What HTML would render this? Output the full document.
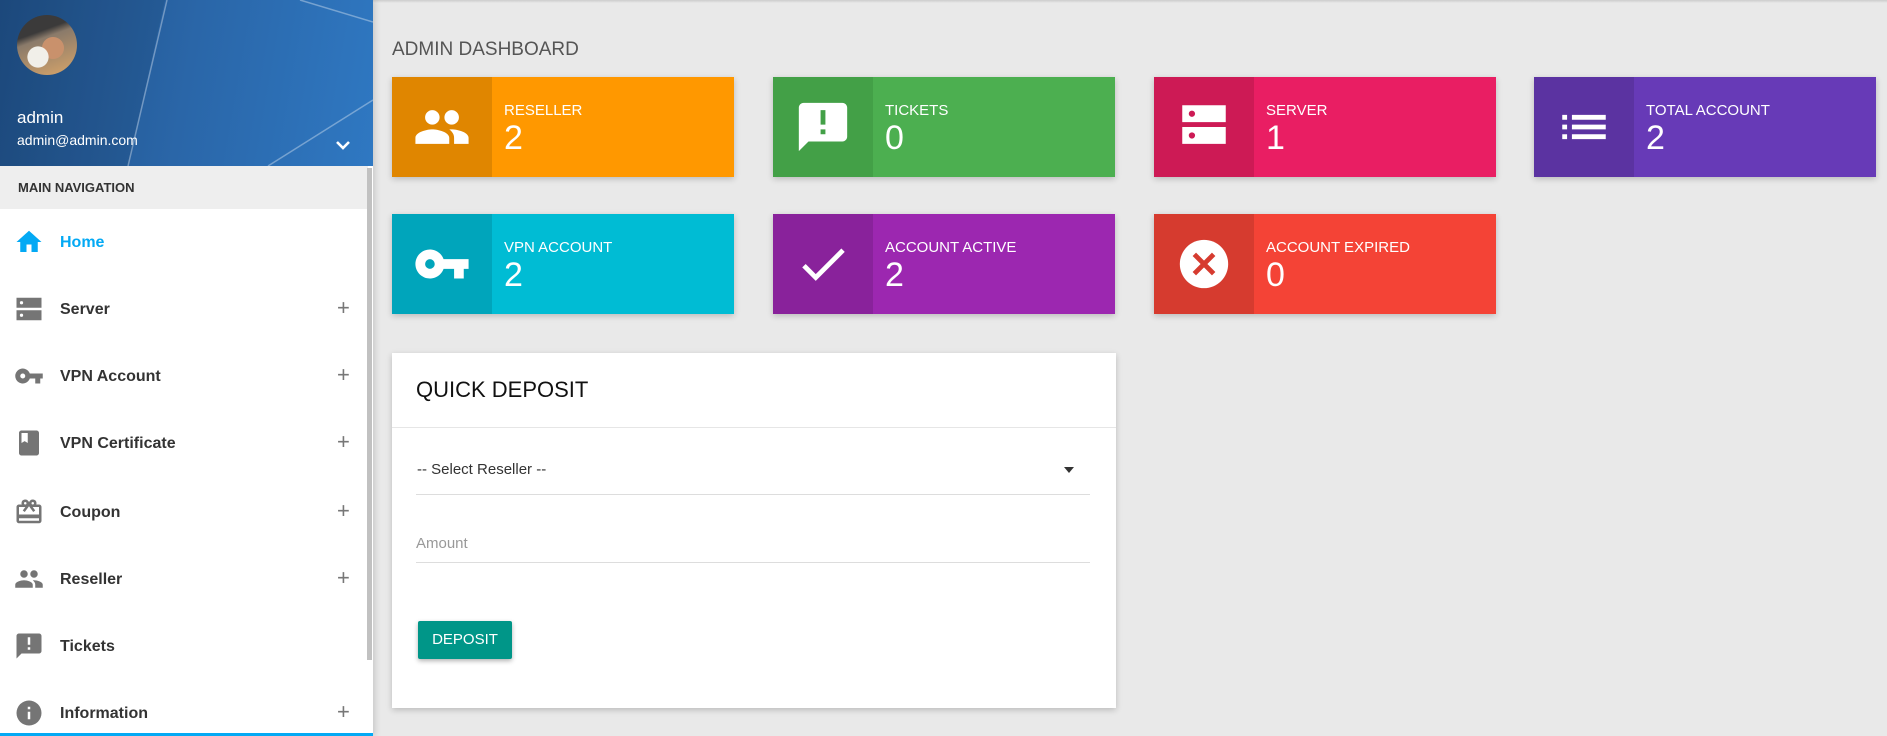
<!DOCTYPE html>
<html><head><meta charset="utf-8"><style>
*{margin:0;padding:0;box-sizing:border-box}
body{width:1887px;height:736px;overflow:hidden;background:#e9e9e9;font-family:"Liberation Sans",Arial,sans-serif;position:relative}
.side{position:absolute;left:0;top:0;width:373px;height:736px;background:#fff;box-shadow:2px 0 6px rgba(0,0,0,.15)}
.hdr{position:absolute;left:0;top:0;width:373px;height:166px;background:linear-gradient(100deg,#1f4f86 0%,#2a66a8 50%,#2f78c2 100%);overflow:hidden}
.av{position:absolute;left:17px;top:15px;width:60px;height:60px;border-radius:50%;background:radial-gradient(circle at 35% 70%,#f1efe9 0 18%,transparent 19%),radial-gradient(circle at 60% 55%,#c9916c 0 22%,transparent 23%),linear-gradient(160deg,#3b3a3a 0 30%,#8a7a6a 40%,#d8a56a 100%)}
.nm{position:absolute;left:17px;top:108px;color:#fff;font-size:17px}
.em{position:absolute;left:17px;top:132px;color:#fff;font-size:14px}
.mn{position:absolute;left:0;top:166px;width:368px;height:43px;background:#eee;font-size:13px;font-weight:bold;color:#333;padding:14px 0 0 18px}
.it{position:absolute;left:0;width:368px;height:30px}
.it svg{position:absolute;left:14px;top:-1px;width:30px;height:30px;fill:#757575}
.it span{position:absolute;left:60px;top:6px;font-size:16px;font-weight:bold;color:#333}
.it b{position:absolute;left:337px;top:0;font-size:22px;font-weight:normal;color:#777}
.sb{position:absolute;left:367px;top:168px;width:5px;height:492px;background:#c1c1c1}
.bl{position:absolute;left:0;top:733px;width:373px;height:3px;background:#03a9f4}
.ttl{position:absolute;left:392px;top:39px;font-size:19px;color:#555}
.card{position:absolute;width:342px;height:100px;box-shadow:0 2px 6px rgba(0,0,0,.2);color:#fff}
.card .ic{position:absolute;left:0;top:0;width:100px;height:100px;display:flex;align-items:center;justify-content:center}
.card .ic svg{width:58px;height:58px;fill:#fff}
.card .l{position:absolute;left:112px;top:25px;font-size:15px}
.card .n{position:absolute;left:112px;top:42px;font-size:34px}
.qd{position:absolute;left:392px;top:353px;width:724px;height:355px;background:#fff;box-shadow:0 2px 6px rgba(0,0,0,.2)}
.qd h2{position:absolute;left:24px;top:24px;font-size:22px;font-weight:normal;color:#111}
.dv{position:absolute;left:0;top:74px;width:100%;height:1px;background:#e6e6e6}
.f{position:absolute;left:24px;width:674px;border-bottom:1px solid #ddd;font-size:15px}
.btn{position:absolute;left:26px;top:268px;width:94px;height:38px;background:#009688;color:#fff;font-size:15px;text-align:center;line-height:38px;border-radius:2px;box-shadow:0 2px 5px rgba(0,0,0,.3)}
.topsh{position:absolute;left:373px;top:0;width:1514px;height:3px;background:linear-gradient(#ccc,#e9e9e9)}
</style></head><body>
<div class="topsh"></div>
<div class="side">
 <div class="hdr">
  <svg width="373" height="166" style="position:absolute;left:0;top:0"><polygon points="0,0 165,0 128,166 0,166" fill="rgba(0,0,0,.08)"/><line x1="167" y1="0" x2="128" y2="166" stroke="rgba(255,255,255,.35)" stroke-width="1.5"/><line x1="300" y1="0" x2="373" y2="22" stroke="rgba(255,255,255,.35)" stroke-width="1.5"/><line x1="268" y1="166" x2="373" y2="100" stroke="rgba(255,255,255,.35)" stroke-width="1.5"/></svg>
  <div class="av"></div>
  <div class="nm">admin</div>
  <div class="em">admin@admin.com</div>
  <svg style="position:absolute;left:334px;top:138px" width="18" height="14" viewBox="0 0 18 14"><path d="M3 4l6 6 6-6" stroke="#fff" stroke-width="2.6" fill="none"/></svg>
 </div>
 <div class="mn">MAIN NAVIGATION</div>
 <div class="it" style="top:228px"><svg viewBox="0 0 24 24" style="fill:#03a9f4"><path d="M10 20v-6h4v6h5v-8h3L12 3 2 12h3v8z"/></svg><span style="color:#03a9f4">Home</span></div>
 <div class="it" style="top:295px"><svg viewBox="0 0 24 24"><path d="M2 3h20v8H2zM2 13h20v8H2z"/><circle cx="6" cy="7" r="1.3" fill="#fff"/><circle cx="6" cy="17" r="1.3" fill="#fff"/></svg><span>Server</span><b>+</b></div>
 <div class="it" style="top:362px"><svg viewBox="0 0 24 24"><path d="M12.65 10A6 6 0 1 0 12.65 14H17v4h4v-4h2v-4H12.65zM7 14a2 2 0 1 1 0-4 2 2 0 0 1 0 4z"/></svg><span>VPN Account</span><b>+</b></div>
 <div class="it" style="top:429px"><svg viewBox="0 0 24 24"><path d="M18 2H6c-1.1 0-2 .9-2 2v16c0 1.1.9 2 2 2h12c1.1 0 2-.9 2-2V4c0-1.1-.9-2-2-2zM6 4h5v8l-2.5-1.5L6 12V4z"/></svg><span>VPN Certificate</span><b>+</b></div>
 <div class="it" style="top:498px"><svg viewBox="0 0 24 24"><path d="M20 6h-2.18c.11-.31.18-.65.18-1a3 3 0 0 0-5.5-1.65l-.5.67-.5-.68A3 3 0 0 0 6 5c0 .35.07.69.18 1H4c-1.11 0-2 .89-2 2v11c0 1.11.89 2 2 2h16c1.11 0 2-.89 2-2V8c0-1.110-.89-2-2-2zm-5-2a1 1 0 1 1 0 2 1 1 0 0 1 0-2zM9 4a1 1 0 1 1 0 2 1 1 0 0 1 0-2zm11 15H4v-2h16v2zm0-5H4V8h5.08L7 10.83 8.62 12 12 7.4l3.38 4.6L17 10.83 14.92 8H20v6z"/></svg><span>Coupon</span><b>+</b></div>
 <div class="it" style="top:565px"><svg viewBox="0 0 24 24"><path d="M16 11a3 3 0 1 0 0-6 3 3 0 0 0 0 6zm-8 0a3 3 0 1 0 0-6 3 3 0 0 0 0 6zm0 2c-2.33 0-7 1.17-7 3.5V19h14v-2.5C15 14.17 10.33 13 8 13zm8 0c-.29 0-.62.02-.97.05 1.16.84 1.970 1.97 1.97 3.45V19h6v-2.5c0-2.33-4.67-3.5-7-3.5z"/></svg><span>Reseller</span><b>+</b></div>
 <div class="it" style="top:632px"><svg viewBox="0 0 24 24"><path d="M20 2H4c-1.1 0-2 .9-2 2v18l4-4h14c1.1 0 2-.9 2-2V4c0-1.1-.9-2-2-2zm-7 9h-2V5h2v6zm0 4h-2v-2h2v2z"/></svg><span>Tickets</span></div>
 <div class="it" style="top:699px"><svg viewBox="0 0 24 24"><path d="M12 2a10 10 0 1 0 0 20 10 10 0 0 0 0-20zm1 15h-2v-6h2v6zm0-8h-2V7h2v2z"/></svg><span>Information</span><b>+</b></div>
 <div class="sb"></div>
 <div class="bl"></div>
</div>

<div class="ttl">ADMIN DASHBOARD</div>

<div class="card" style="left:392px;top:77px;background:#ff9800"><div class="ic" style="background:#e08600"><svg viewBox="0 0 24 24"><path d="M16 11a3 3 0 1 0 0-6 3 3 0 0 0 0 6zm-8 0a3 3 0 1 0 0-6 3 3 0 0 0 0 6zm0 2c-2.33 0-7 1.17-7 3.5V19h14v-2.5C15 14.17 10.33 13 8 13zm8 0c-.29 0-.62.02-.97.05 1.16.84 1.97 1.97 1.97 3.45V19h6v-2.5c0-2.33-4.67-3.5-7-3.5z"/></svg></div><div class="l">RESELLER</div><div class="n">2</div></div>
<div class="card" style="left:773px;top:77px;background:#4caf50"><div class="ic" style="background:#43a047"><svg viewBox="0 0 24 24"><path d="M20 2H4c-1.1 0-2 .9-2 2v18l4-4h14c1.1 0 2-.9 2-2V4c0-1.1-.9-2-2-2zm-7 9h-2V5h2v6zm0 4h-2v-2h2v2z"/></svg></div><div class="l">TICKETS</div><div class="n">0</div></div>
<div class="card" style="left:1154px;top:77px;background:#e91e63"><div class="ic" style="background:#cd1a55"><svg viewBox="0 0 24 24"><path d="M3 3h18v7H3zM3 12h18v7H3z"/><circle cx="7" cy="6.5" r="1.3" fill="#cd1a55"/><circle cx="7" cy="15.5" r="1.3" fill="#cd1a55"/></svg></div><div class="l">SERVER</div><div class="n">1</div></div>
<div class="card" style="left:1534px;top:77px;background:#673ab7"><div class="ic" style="background:#5b33a1"><svg viewBox="0 0 24 24"><path d="M3 13h2v-2H3v2zm0 4h2v-2H3v2zm0-8h2V7H3v2zm4 4h14v-2H7v2zm0 4h14v-2H7v2zM7 7v2h14V7H7z"/></svg></div><div class="l">TOTAL ACCOUNT</div><div class="n">2</div></div>

<div class="card" style="left:392px;top:214px;background:#00bcd4"><div class="ic" style="background:#00a5bb"><svg viewBox="0 0 24 24"><path d="M12.65 10A6 6 0 1 0 12.65 14H17v4h4v-4h2v-4H12.65zM7 14a2 2 0 1 1 0-4 2 2 0 0 1 0 4z"/></svg></div><div class="l">VPN ACCOUNT</div><div class="n">2</div></div>
<div class="card" style="left:773px;top:214px;background:#9c27b0"><div class="ic" style="background:#89229b"><svg viewBox="0 0 24 24"><path d="M9 16.17L4.83 12l-1.42 1.41L9 19 21 7l-1.41-1.41z"/></svg></div><div class="l">ACCOUNT ACTIVE</div><div class="n">2</div></div>
<div class="card" style="left:1154px;top:214px;background:#f44336"><div class="ic" style="background:#d63b2f"><svg viewBox="0 0 24 24"><circle cx="12" cy="12" r="10"/><path d="M8 8l8 8M16 8l-8 8" stroke="#d63b2f" stroke-width="2"/></svg></div><div class="l">ACCOUNT EXPIRED</div><div class="n">0</div></div>

<div class="qd">
 <h2>QUICK DEPOSIT</h2>
 <div class="dv"></div>
 <div class="f" style="top:108px;height:34px;color:#333;padding-left:1px">-- Select Reseller --<svg style="position:absolute;right:16px;top:6px" width="10" height="6"><path d="M0 0h10L5 6z" fill="#333"/></svg></div>
 <div class="f" style="top:182px;height:28px;color:#999">Amount</div>
 <div class="btn">DEPOSIT</div>
</div>
</body></html>
